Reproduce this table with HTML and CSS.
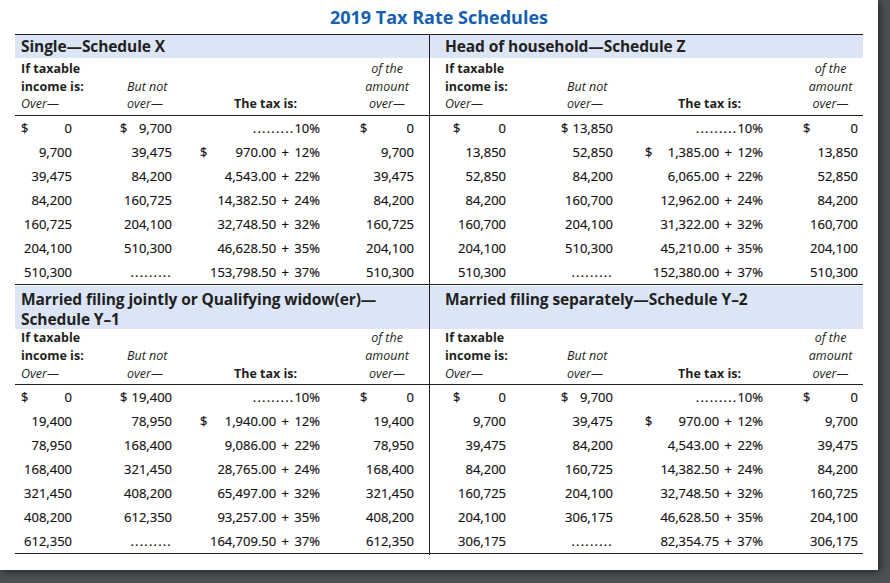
FILE: index.html
```html
<!DOCTYPE html>
<html lang="en">
<head>
<meta charset="utf-8">
<title>2019 Tax Rate Schedules</title>
<link rel="stylesheet" href="styles.css">
</head>
<body>
<div class="page">
  <h1 class="title">2019 Tax Rate Schedules</h1>
  <div class="schedules">

    <section class="panel left top">
      <h2 class="band">Single—Schedule X</h2>
      <div class="labels">
        <div class="l1"><b>If taxable</b><b>income is:</b><i>Over—</i></div>
        <div class="l2"><i>But not</i><i>over—</i></div>
        <div class="l3"><b>The tax is:</b></div>
        <div class="l4"><i>of the</i><i>amount</i><i>over—</i></div>
      </div>
      <div class="data">
        <div class="row"><div class="c"><span>$</span><span class="n">0</span></div><div class="c"><span>$</span><span class="n">9,700</span></div><div class="c"><span class="n"><span class="dots">.........</span>10%</span></div><div class="c"><span>$</span><span class="n">0</span></div></div>
        <div class="row"><div class="c"><span class="n">9,700</span></div><div class="c"><span class="n">39,475</span></div><div class="c"><span>$</span><span class="n">970.00 + 12%</span></div><div class="c"><span class="n">9,700</span></div></div>
        <div class="row"><div class="c"><span class="n">39,475</span></div><div class="c"><span class="n">84,200</span></div><div class="c"><span class="n">4,543.00 + 22%</span></div><div class="c"><span class="n">39,475</span></div></div>
        <div class="row"><div class="c"><span class="n">84,200</span></div><div class="c"><span class="n">160,725</span></div><div class="c"><span class="n">14,382.50 + 24%</span></div><div class="c"><span class="n">84,200</span></div></div>
        <div class="row"><div class="c"><span class="n">160,725</span></div><div class="c"><span class="n">204,100</span></div><div class="c"><span class="n">32,748.50 + 32%</span></div><div class="c"><span class="n">160,725</span></div></div>
        <div class="row"><div class="c"><span class="n">204,100</span></div><div class="c"><span class="n">510,300</span></div><div class="c"><span class="n">46,628.50 + 35%</span></div><div class="c"><span class="n">204,100</span></div></div>
        <div class="row"><div class="c"><span class="n">510,300</span></div><div class="c"><span class="n dots">.........</span></div><div class="c"><span class="n">153,798.50 + 37%</span></div><div class="c"><span class="n">510,300</span></div></div>
      </div>
    </section>

    <section class="panel right top">
      <h2 class="band">Head of household—Schedule Z</h2>
      <div class="labels">
        <div class="l1"><b>If taxable</b><b>income is:</b><i>Over—</i></div>
        <div class="l2"><i>But not</i><i>over—</i></div>
        <div class="l3"><b>The tax is:</b></div>
        <div class="l4"><i>of the</i><i>amount</i><i>over—</i></div>
      </div>
      <div class="data">
        <div class="row"><div class="c"><span>$</span><span class="n">0</span></div><div class="c"><span>$</span><span class="n">13,850</span></div><div class="c"><span class="n"><span class="dots">.........</span>10%</span></div><div class="c"><span>$</span><span class="n">0</span></div></div>
        <div class="row"><div class="c"><span class="n">13,850</span></div><div class="c"><span class="n">52,850</span></div><div class="c"><span>$</span><span class="n">1,385.00 + 12%</span></div><div class="c"><span class="n">13,850</span></div></div>
        <div class="row"><div class="c"><span class="n">52,850</span></div><div class="c"><span class="n">84,200</span></div><div class="c"><span class="n">6,065.00 + 22%</span></div><div class="c"><span class="n">52,850</span></div></div>
        <div class="row"><div class="c"><span class="n">84,200</span></div><div class="c"><span class="n">160,700</span></div><div class="c"><span class="n">12,962.00 + 24%</span></div><div class="c"><span class="n">84,200</span></div></div>
        <div class="row"><div class="c"><span class="n">160,700</span></div><div class="c"><span class="n">204,100</span></div><div class="c"><span class="n">31,322.00 + 32%</span></div><div class="c"><span class="n">160,700</span></div></div>
        <div class="row"><div class="c"><span class="n">204,100</span></div><div class="c"><span class="n">510,300</span></div><div class="c"><span class="n">45,210.00 + 35%</span></div><div class="c"><span class="n">204,100</span></div></div>
        <div class="row"><div class="c"><span class="n">510,300</span></div><div class="c"><span class="n dots">.........</span></div><div class="c"><span class="n">152,380.00 + 37%</span></div><div class="c"><span class="n">510,300</span></div></div>
      </div>
    </section>

    <section class="panel left bottom">
      <h2 class="band"><span class="bl">Married filing jointly or Qualifying widow(er)—</span><span class="bl">Schedule Y–1</span></h2>
      <div class="labels">
        <div class="l1"><b>If taxable</b><b>income is:</b><i>Over—</i></div>
        <div class="l2"><i>But not</i><i>over—</i></div>
        <div class="l3"><b>The tax is:</b></div>
        <div class="l4"><i>of the</i><i>amount</i><i>over—</i></div>
      </div>
      <div class="data">
        <div class="row"><div class="c"><span>$</span><span class="n">0</span></div><div class="c"><span>$</span><span class="n">19,400</span></div><div class="c"><span class="n"><span class="dots">.........</span>10%</span></div><div class="c"><span>$</span><span class="n">0</span></div></div>
        <div class="row"><div class="c"><span class="n">19,400</span></div><div class="c"><span class="n">78,950</span></div><div class="c"><span>$</span><span class="n">1,940.00 + 12%</span></div><div class="c"><span class="n">19,400</span></div></div>
        <div class="row"><div class="c"><span class="n">78,950</span></div><div class="c"><span class="n">168,400</span></div><div class="c"><span class="n">9,086.00 + 22%</span></div><div class="c"><span class="n">78,950</span></div></div>
        <div class="row"><div class="c"><span class="n">168,400</span></div><div class="c"><span class="n">321,450</span></div><div class="c"><span class="n">28,765.00 + 24%</span></div><div class="c"><span class="n">168,400</span></div></div>
        <div class="row"><div class="c"><span class="n">321,450</span></div><div class="c"><span class="n">408,200</span></div><div class="c"><span class="n">65,497.00 + 32%</span></div><div class="c"><span class="n">321,450</span></div></div>
        <div class="row"><div class="c"><span class="n">408,200</span></div><div class="c"><span class="n">612,350</span></div><div class="c"><span class="n">93,257.00 + 35%</span></div><div class="c"><span class="n">408,200</span></div></div>
        <div class="row"><div class="c"><span class="n">612,350</span></div><div class="c"><span class="n dots">.........</span></div><div class="c"><span class="n">164,709.50 + 37%</span></div><div class="c"><span class="n">612,350</span></div></div>
      </div>
    </section>

    <section class="panel right bottom">
      <h2 class="band"><span class="bl">Married filing separately—Schedule Y–2</span></h2>
      <div class="labels">
        <div class="l1"><b>If taxable</b><b>income is:</b><i>Over—</i></div>
        <div class="l2"><i>But not</i><i>over—</i></div>
        <div class="l3"><b>The tax is:</b></div>
        <div class="l4"><i>of the</i><i>amount</i><i>over—</i></div>
      </div>
      <div class="data">
        <div class="row"><div class="c"><span>$</span><span class="n">0</span></div><div class="c"><span>$</span><span class="n">9,700</span></div><div class="c"><span class="n"><span class="dots">.........</span>10%</span></div><div class="c"><span>$</span><span class="n">0</span></div></div>
        <div class="row"><div class="c"><span class="n">9,700</span></div><div class="c"><span class="n">39,475</span></div><div class="c"><span>$</span><span class="n">970.00 + 12%</span></div><div class="c"><span class="n">9,700</span></div></div>
        <div class="row"><div class="c"><span class="n">39,475</span></div><div class="c"><span class="n">84,200</span></div><div class="c"><span class="n">4,543.00 + 22%</span></div><div class="c"><span class="n">39,475</span></div></div>
        <div class="row"><div class="c"><span class="n">84,200</span></div><div class="c"><span class="n">160,725</span></div><div class="c"><span class="n">14,382.50 + 24%</span></div><div class="c"><span class="n">84,200</span></div></div>
        <div class="row"><div class="c"><span class="n">160,725</span></div><div class="c"><span class="n">204,100</span></div><div class="c"><span class="n">32,748.50 + 32%</span></div><div class="c"><span class="n">160,725</span></div></div>
        <div class="row"><div class="c"><span class="n">204,100</span></div><div class="c"><span class="n">306,175</span></div><div class="c"><span class="n">46,628.50 + 35%</span></div><div class="c"><span class="n">204,100</span></div></div>
        <div class="row"><div class="c"><span class="n">306,175</span></div><div class="c"><span class="n dots">.........</span></div><div class="c"><span class="n">82,354.75 + 37%</span></div><div class="c"><span class="n">306,175</span></div></div>
      </div>
    </section>

  </div>
</div>
</body>
</html>
```

FILE: styles.css
```css
* { box-sizing: border-box; }
html, body { margin: 0; padding: 0; }
body {
  background: #4d5154;
  width: 890px;
  height: 583px;
  overflow: hidden;
  font-family: "Open Sans", "Noto Sans", sans-serif;
  color: #231f20;
}
.page {
  width: 878px;
  height: 570px;
  background: #fff;
  box-shadow: 2px 2px 8px rgba(0,0,0,0.55);
  padding: 0 15px 0 15px;
}
.title {
  margin: 0;
  height: 34px;
  line-height: 34px;
  text-align: center;
  font-size: 18px;
  font-weight: 700;
  color: #1560b0;
}
.schedules {
  display: grid;
  grid-template-columns: 415px 433px;
  grid-template-rows: 251px 269px;
  border-top: 1px solid #231f20;
}
.panel.left { border-right: 1px solid #231f20; }
.band {
  margin: 0;
  background: #dbe5f5;
  font-size: 15.5px;
  font-weight: 700;
  letter-spacing: -0.1px;
}
.top .band { height: 23px; line-height: 23px; }
.bottom .band {
  height: 43px;
  padding-top: 3px;
  display: flex;
  flex-direction: column;
}
.bottom .band .bl { display: block; height: 20px; line-height: 20px; }
.left .band { padding-left: 6px; }
.right .band { padding-left: 15px; }

.labels {
  display: grid;
  font-size: 12.5px;
  border-bottom: 1px solid #231f20;
}
.top .labels { line-height: 17.5px; padding: 2px 0 2px; }
.bottom .labels { line-height: 18px; padding: 0 0 1px; }
.labels > div { display: flex; flex-direction: column; justify-content: flex-end; }
.labels b { font-weight: 700; }
.labels i { font-style: italic; }
.labels .l4 { align-items: center; }
.left .labels .l2 { padding-left: 7px; }
.left .labels .l3 { padding-left: 34px; }
.right .labels .l2 { padding-left: 6px; }
.right .labels .l3 { padding-left: 33px; }

.data { border-bottom: 1px solid #231f20; }
.row {
  display: grid;
  height: 24px;
  align-items: center;
  font-size: 13px;
  word-spacing: 2px;
  color: #141112;
  -webkit-text-stroke: 0.2px #141112;
}
.c { display: flex; white-space: nowrap; }
.c .n { margin-left: auto; }
.dots { letter-spacing: 1.2px; }

.left .labels, .left .data { padding-left: 6px; }
.right .labels, .right .data { padding-left: 15px; }
.left .labels, .left .row { grid-template-columns: 99px 80px 160px 54px; }
.right .labels, .right .row { grid-template-columns: 116px 84px 158px 55px; }

.left .c:nth-child(1) { padding-right: 48px; }
.left .c:nth-child(2) { padding-right: 28px; }
.left .c:nth-child(3) { padding-right: 40px; }
.right .c:nth-child(1) { padding-left: 8px; padding-right: 55px; }
.right .c:nth-child(2) { padding-right: 32px; }
.right .c:nth-child(3) { padding-right: 40px; }
```
